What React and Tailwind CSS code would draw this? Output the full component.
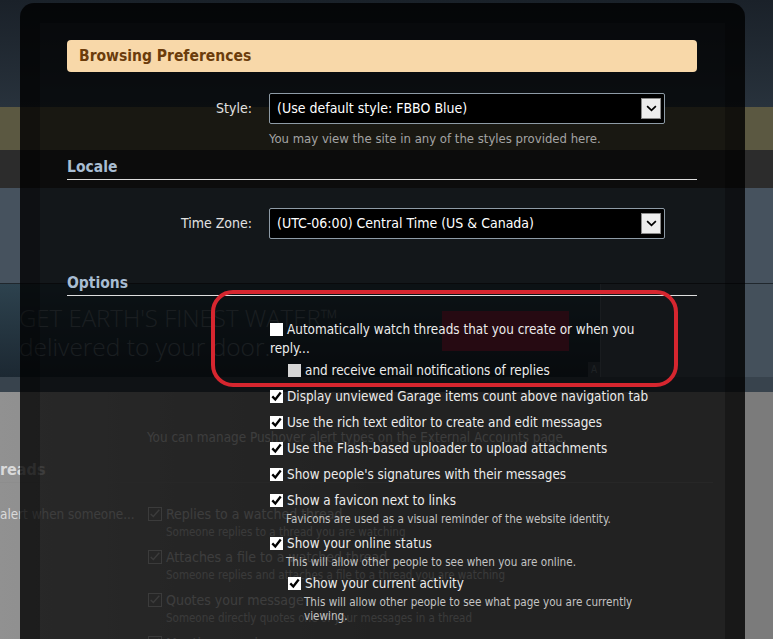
import React from 'react';

function Box({ checked, disabled }) {
  return (
    <span
      className={`mr-[4px] inline-flex h-[13px] w-[13px] shrink-0 items-center justify-center align-[-2px] ${
        disabled ? 'bg-[#d6d6d6]' : 'bg-white'
      }`}
    >
      {checked && (
        <svg viewBox="0 0 13 13" className="h-[13px] w-[13px]">
          <path d="M2.3 6.4l3 3.1 5.4-7" fill="none" stroke="#000" strokeWidth="2.3" />
        </svg>
      )}
    </span>
  );
}

function Select({ value }) {
  return (
    <div className="flex h-[31px] w-[396px] items-center justify-between rounded-[2px] border border-[#8e9ba6] bg-black pl-[7px] pr-[3px]">
      <span className="text-[14px] text-white">{value}</span>
      <span className="flex h-[21px] w-[20px] items-center justify-center border border-[#8a8a8a] bg-[#ededed]">
        <svg viewBox="0 0 12 8" className="h-[7px] w-[11px]">
          <path d="M1 1.2l5 5 5-5" fill="none" stroke="#000" strokeWidth="1.9" />
        </svg>
      </span>
    </div>
  );
}

function Option({ checked = true, disabled, indent, hint, children, className = '' }) {
  return (
    <li className={`${indent ? 'ml-[19px]' : 'ml-[1px]'} ${className}`}>
      <div className="leading-[19px] text-[#ececec]">
        <Box checked={checked} disabled={disabled} />
        {children}
      </div>
      {hint && (
        <p className="mt-[2px] pl-[16px] text-[11.6px] leading-[14px] text-[#c4c4c4]">{hint}</p>
      )}
    </li>
  );
}

function PageCheck({ label, sub, className = '' }) {
  return (
    <div className={`flex ${className}`}>
      <span className="mt-[2px] flex h-[14px] w-[14px] shrink-0 items-center justify-center border border-[#d4d4d4]">
        <svg viewBox="0 0 14 14" className="h-[12px] w-[12px]">
          <path d="M2 7l3 3 7-8" fill="none" stroke="#d4d4d4" strokeWidth="1.6" />
        </svg>
      </span>
      <div className="ml-[4px]">
        <p className="text-[14px] leading-[19px]">{label}</p>
        <p className="text-[11.5px] leading-[17px] text-[#cfcfcf]">{sub}</p>
      </div>
    </div>
  );
}

export default function App() {
  return (
    <div className="relative h-[639px] w-[773px] overflow-hidden bg-[#7b7b7b] font-['DejaVu_Sans_Condensed','DejaVu_Sans',sans-serif] text-[13.4px] font-stretch-condensed">
      {/* page behind the dialog */}
      <div className="h-[107px] bg-gradient-to-b from-[#1a2129] to-[#28323c]" />
      <div className="h-[43px] bg-[#5b5841]" />
      <div className="h-[38px] bg-[#2c2c2c]" />
      <div className="h-[96px] border-b border-[#20272d] bg-[#46525e]" />
      <div className="flex h-[93px] bg-[#44505b]">
        <div className="relative flex w-[601px] items-center border-r border-[#5b666f] bg-gradient-to-b from-[#2d424e] to-[#1c2832]">
          <div className="pl-[19px] pt-[2px] font-['Open_Sans',sans-serif] text-[24px] font-light leading-[29px] font-stretch-normal text-[#5e6d77]">
            <p>GET EARTH'S FINEST WATER™</p>
            <p className="text-[24.5px]">delivered to your door.</p>
          </div>
          <div className="ml-auto mr-[31px] h-[40px] w-[127px] bg-[#8a2440]" />
          <span className="absolute bottom-0 right-0 flex h-[15px] w-[12px] items-center justify-center bg-[#3a4650] text-[10px] text-[#6d7a84]">
            A
          </span>
        </div>
      </div>
      <div className="h-[15px] bg-[#38434d]" />
      <div className="bg-gradient-to-r from-[#919191] via-[#6c6c6c_20px] to-[#7b7b7b_60px] text-[#dadada]">
        <p className="pl-[147px] pt-[37px] text-[13.4px] leading-[17px]">
          You can manage Pushover alert types on the External Accounts page.
        </p>
        <div className="mt-[14px] w-[713px] border-b border-[#8d8d8d] pb-[2px]">
          <p className="text-[16px] font-bold leading-[20px]">reads</p>
        </div>
        <div className="mt-[22px] flex">
          <p className="w-[131px] whitespace-nowrap text-right text-[13.4px] leading-[19px]">
            alert when someone...
          </p>
          <div className="ml-[17px]">
            <PageCheck label="Replies to a watched thread" sub="Someone replies to a thread you are watching" />
            <PageCheck
              className="mt-[7px]"
              label="Attaches a file to a watched thread"
              sub="Someone replies and attaches a file to a thread you are watching"
            />
            <PageCheck
              className="mt-[7px]"
              label="Quotes your message"
              sub="Someone directly quotes one of your messages in a thread"
            />
            <PageCheck className="mt-[7px]" label="Mentions you in a message" sub="" />
          </div>
        </div>
      </div>

      {/* dialog */}
      <div className="absolute left-[20px] top-[3px] h-[700px] w-[725px] rounded-t-[14px] border-[20px] border-[rgba(0,0,0,0.8)] bg-[rgba(0,0,0,0.72)] bg-clip-padding pl-[27px] pr-[28px] pt-[17px]">
        <h2 className="flex h-[32px] items-center rounded-[4px] bg-[#f8d8a9] px-[12px] pt-[2px] text-[15.5px] font-bold text-[#6b3c0c]">
          Browsing Preferences
        </h2>

        <div className="mt-[21px] flex items-center">
          <label className="w-[185px] text-right text-[14px] text-[#e2e2e2]">Style:</label>
          <div className="ml-[17px]">
            <Select value="(Use default style: FBBO Blue)" />
          </div>
        </div>
        <p className="ml-[202px] mt-[7px] text-[13px] leading-[16px] text-[#a4a4a4]">
          You may view the site in any of the styles provided here.
        </p>

        <h3 className="mt-[10px] border-b border-[#dedede] pb-[2px] text-[15.5px] font-bold leading-[20px] text-[#a8bdd2]">
          Locale
        </h3>

        <div className="mt-[28px] flex items-center">
          <label className="w-[185px] text-right text-[14px] text-[#e2e2e2]">Time Zone:</label>
          <div className="ml-[17px]">
            <Select value="(UTC-06:00) Central Time (US & Canada)" />
          </div>
        </div>

        <h3 className="mt-[34px] border-b border-[#dedede] pb-[2px] text-[15.5px] font-bold leading-[20px] text-[#a8bdd2]">
          Options
        </h3>

        <ul className="ml-[202px] mt-[24px] w-[396px]">
          <Option checked={false}>
            Automatically watch threads that you create or when you reply...
          </Option>
          <Option checked={false} disabled indent className="mt-[3px]">
            and receive email notifications of replies
          </Option>
          <Option className="mt-[7px]">Display unviewed Garage items count above navigation tab</Option>
          <Option className="mt-[7px]">Use the rich text editor to create and edit messages</Option>
          <Option className="mt-[7px]">Use the Flash-based uploader to upload attachments</Option>
          <Option className="mt-[7px]">Show people's signatures with their messages</Option>
          <Option className="mt-[7px]" hint="Favicons are used as a visual reminder of the website identity.">
            Show a favicon next to links
          </Option>
          <Option className="mt-[8px]" hint="This will allow other people to see when you are online.">
            Show your online status
          </Option>
          <Option
            indent
            className="mt-[5px]"
            hint="This will allow other people to see what page you are currently viewing."
          >
            Show your current activity
          </Option>
        </ul>
      </div>

      {/* red annotation */}
      <div className="absolute left-[211px] top-[290px] h-[97px] w-[467px] rounded-[22px] border-[4px] border-[#d6262f]" />
    </div>
  );
}
